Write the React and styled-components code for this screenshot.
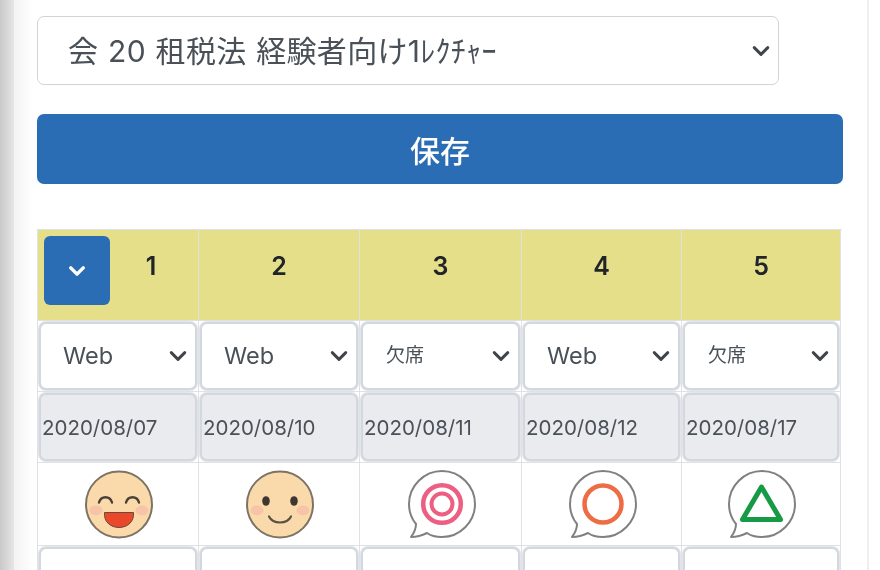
import React from 'react'
import styled, { createGlobalStyle } from 'styled-components'

const GlobalStyle = createGlobalStyle`
  html, body {
    margin: 0;
    padding: 0;
    height: 570px;
    overflow: hidden;
    background: #fff;
    font-family: Inter, "Noto Sans CJK JP", sans-serif;
  }
`

const arrow = `url("data:image/svg+xml,%3csvg xmlns='http://www.w3.org/2000/svg' viewBox='0 0 16 16'%3e%3cpath fill='none' stroke='%23414549' stroke-linecap='round' stroke-linejoin='round' stroke-width='2.6' d='M2 5l6 6 6-6'/%3e%3c/svg%3e")`

const columns = [
  { no: 1, mode: 'Web', date: '2020/08/07', mark: 'laugh' },
  { no: 2, mode: 'Web', date: '2020/08/10', mark: 'smile' },
  { no: 3, mode: '欠席', date: '2020/08/11', mark: 'double' },
  { no: 4, mode: 'Web', date: '2020/08/12', mark: 'circle' },
  { no: 5, mode: '欠席', date: '2020/08/17', mark: 'triangle' },
]

const Face = ({ laugh }) => (
  <MarkSvg viewBox="-1 -0.5 70 70">
    <circle cx="35" cy="35" r="33" fill="#fadaab" stroke="#7d7365" strokeWidth="2" />
    <ellipse cx="12" cy="41" rx="6.5" ry="5" fill="#f8c4a8" />
    <ellipse cx="58" cy="41" rx="6.5" ry="5" fill="#f8c4a8" />
    {laugh ? (
      <>
        <path d="M15 33c2-7 11-7 13 0M42 33c2-7 11-7 13 0" fill="none" stroke="#4a4038" strokeWidth="2.4" strokeLinecap="round" />
        <path d="M20.500 43h29c1 9-6 15-14.500 15s-15.500-6-14.500-15z" fill="#e9482b" stroke="#6a4a3c" strokeWidth="1" />
      </>
    ) : (
      <>
        <ellipse cx="21" cy="31.500" rx="3.800" ry="4.800" fill="#3d3631" />
        <ellipse cx="49" cy="31.500" rx="3.800" ry="4.800" fill="#3d3631" />
        <path d="M24 47c4 8 18 8 22 0" fill="none" stroke="#5a5045" strokeWidth="2.2" strokeLinecap="round" />
      </>
    )}
  </MarkSvg>
)

const Bubble = ({ children }) => (
  <MarkSvg viewBox="0 0 70 70">
    <path
      d="M36 2c18 0 33 15 33 33S54 68 36 68c-6 0-11-1-15-4-4 2-9 4-16 4 3-4 5-9 5-13C5 49 3 42 3 35 3 17 18 2 36 2z"
      fill="#fff"
      stroke="#808082"
      strokeWidth="2"
      strokeLinejoin="round"
    />
    {children}
  </MarkSvg>
)

const Mark = ({ type }) => {
  if (type === 'laugh') return <Face laugh />
  if (type === 'smile') return <Face />
  if (type === 'double')
    return (
      <Bubble>
        <circle cx="36" cy="35" r="18.800" fill="none" stroke="#ec5f82" strokeWidth="4.500" />
        <circle cx="36" cy="35" r="10.500" fill="none" stroke="#ec5f82" strokeWidth="4" />
      </Bubble>
    )
  if (type === 'circle')
    return (
      <Bubble>
        <circle cx="36" cy="35" r="18.500" fill="none" stroke="#ee6c43" strokeWidth="4.500" />
      </Bubble>
    )
  return (
    <Bubble>
      <path d="M35.500 18L54.500 50.500H16.500z" fill="none" stroke="#179a45" strokeWidth="5" strokeLinejoin="round" />
    </Bubble>
  )
}

const App = () => (
  <>
    <GlobalStyle />
    <Page>
      <Rail />
      <Panel>
        <CourseSelect defaultValue="20">
          <option value="20">会 20 租税法 経験者向け1ﾚｸﾁｬｰ</option>
        </CourseSelect>
        <SaveButton>保存</SaveButton>
        <Sheet>
          {columns.map((c) => (
            <HeadCell key={c.no}>
              {c.no === 1 && (
                <ToggleButton aria-label="toggle">
                  <svg width="20" height="20" viewBox="0 0 16 16">
                    <path d="M3 5.500L8 10.500l5-5" fill="none" stroke="#fff" strokeWidth="2.800" strokeLinecap="round" strokeLinejoin="round" />
                  </svg>
                </ToggleButton>
              )}
              <HeadNumber>{c.no}</HeadNumber>
            </HeadCell>
          ))}
          {columns.map((c) => (
            <BoxCell key={c.no}>
              <ModeSelect $jp={c.mode !== 'Web'} defaultValue={c.mode}>
                <option>Web</option>
                <option>欠席</option>
              </ModeSelect>
            </BoxCell>
          ))}
          {columns.map((c) => (
            <BoxCell key={c.no}>
              <DateBox>{c.date}</DateBox>
            </BoxCell>
          ))}
          {columns.map((c) => (
            <MarkCell key={c.no}>
              <Mark type={c.mark} />
            </MarkCell>
          ))}
          {columns.map((c) => (
            <BoxCell key={c.no}>
              <EmptyBox />
            </BoxCell>
          ))}
        </Sheet>
      </Panel>
    </Page>
  </>
)

const Page = styled.div`
  display: flex;
  width: 880px;
  height: 570px;
  overflow: hidden;
  filter: blur(0.6px);
`

const Rail = styled.div`
  flex: 0 0 14px;
  background: linear-gradient(to right, #c9c9c9, #e6e6e6);
`

const Panel = styled.main`
  box-sizing: border-box;
  width: 855px;
  height: 570px;
  padding: 16px 25px 0 23px;
  border-right: 2px solid #efefef;
  background: linear-gradient(to right, #f3f3f3, #fff 20px);
`

const CourseSelect = styled.select`
  display: block;
  box-sizing: border-box;
  width: 742px;
  height: 69px;
  padding: 0 30px;
  border: 1px solid #ced4da;
  border-radius: 7px;
  color: #495057;
  font-family: inherit;
  font-size: 30px;
  letter-spacing: 0.3px;
  word-spacing: 1px;
  appearance: none;
  background: #fff ${arrow} no-repeat right 8px center / 18px 18px;
`

const SaveButton = styled.button`
  display: block;
  width: 806px;
  height: 70px;
  margin: 29px 0 45px;
  border: 0;
  border-radius: 7px;
  background: #2b6db4;
  color: #fff;
  font-family: inherit;
  font-size: 30px;
  font-weight: 500;
`

const Sheet = styled.div`
  display: grid;
  grid-template-columns: 161px 161px 162px 160px 159px;
  width: 804px;
  border-top: 1px solid #dee2e6;
  border-left: 1px solid #dee2e6;
`

const Cell = styled.div`
  box-sizing: border-box;
  display: flex;
  align-items: center;
  border-right: 1px solid #dee2e6;
  border-bottom: 1px solid #dee2e6;
`

const HeadCell = styled(Cell)`
  height: 91px;
  padding: 6px;
  align-items: flex-start;
  background: #e6df8a;
`

const HeadNumber = styled.span`
  flex: 1;
  padding-top: 15px;
  text-align: center;
  color: #212529;
  font-size: 25px;
  line-height: 30px;
  font-weight: 600;
`

const ToggleButton = styled.button`
  display: flex;
  align-items: center;
  justify-content: center;
  width: 66px;
  height: 69px;
  padding: 0;
  border: 0;
  border-radius: 6px;
  background: #2b6db4;
`

const BoxCell = styled(Cell)`
  height: 71px;
  padding: 1px;
`

const ModeSelect = styled.select`
  box-sizing: border-box;
  width: 100%;
  height: 100%;
  padding: 0 0 2px ${(p) => (p.$jp ? '23px' : '22px')};
  border: 2px solid #d3d8de;
  border-radius: 7px;
  box-shadow: 0 0 0 1px #e2e5e9;
  color: #495057;
  font-family: inherit;
  font-size: ${(p) => (p.$jp ? '19px' : '23.5px')};
  appearance: none;
  background: #fff ${arrow} no-repeat right 8px center / 18px 18px;
`

const DateBox = styled.div`
  box-sizing: border-box;
  display: flex;
  align-items: center;
  width: 100%;
  height: 100%;
  padding-left: 1px;
  border: 2px solid #d3d8de;
  border-radius: 7px;
  box-shadow: 0 0 0 1px #e2e5e9;
  background: #e9ebef;
  color: #495057;
  font-size: 20.5px;
  white-space: nowrap;
`

const EmptyBox = styled.div`
  box-sizing: border-box;
  width: 100%;
  height: 100%;
  border: 2px solid #d3d8de;
  border-radius: 7px;
  box-shadow: 0 0 0 1px #e2e5e9;
  background: #fff;
`

const MarkCell = styled(Cell)`
  height: 83px;
  justify-content: center;
`

const MarkSvg = styled.svg`
  display: block;
  width: 70px;
  height: 70px;
`

export default App
